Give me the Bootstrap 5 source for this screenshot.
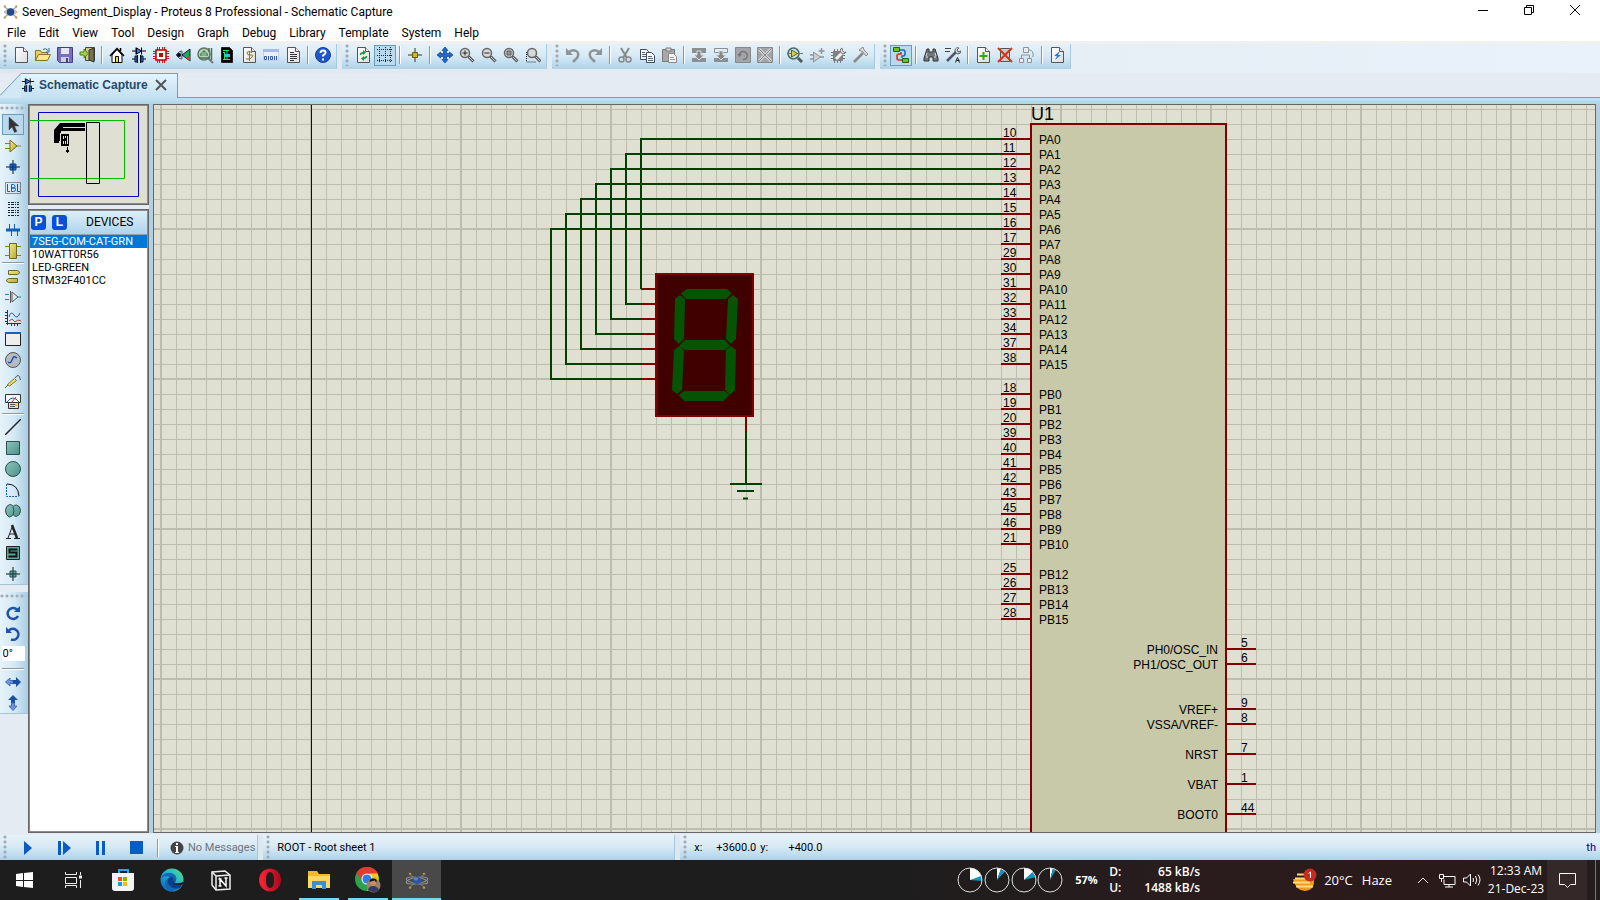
<!DOCTYPE html>
<html lang="en">
<head>
<meta charset="utf-8">
<meta name="viewport" content="width=device-width, initial-scale=1">
<title>Seven_Segment_Display - Proteus 8 Professional - Schematic Capture</title>
<link href="https://cdn.jsdelivr.net/npm/bootstrap@5.3.0/dist/css/bootstrap.min.css" rel="stylesheet">
<style>
:root{--bar:linear-gradient(#e6f1f9,#d9eaf5 45%,#bcdcef 80%,#b0d0e6);--ui:"Open Sans","Noto Sans",sans-serif;--small:Roboto,"Liberation Sans",sans-serif}
body{font:12px/16px var(--ui);color:#000;background:#e4ebf2;overflow:hidden}
svg{display:block;flex:none}
button{border:0;background:none;padding:0;color:inherit;font:inherit}
.titlebar{height:24px;padding:0 2px 0 3px;background:#fff}
.titlebar h1{font:12px/16px var(--small);margin:0 0 0 4px}
.winbtn{width:46px;height:20px;display:grid;place-items:center}
.menubar{height:17px;background:#fff;padding-left:7px;gap:13px;font-family:var(--small)}
.menubar a{color:#000;text-decoration:none}
.tools{height:32px;border-top:3px solid #f0f0f0;padding-bottom:4px;gap:5px;background:linear-gradient(90deg,#dfe6ee,#e9f2fa)}
.bar{background:var(--bar);padding-right:2px;border-right:1px solid #a5c9de}
.tools .bar{padding-bottom:3px}
.grip{width:10px;flex:none;background:radial-gradient(circle at 2px 2px,#9fa9b0 1px,#fff0 2px) 3px 0/4px 5px repeat-y}
.tb{width:22px;height:21px;display:grid;place-items:center;border:1px solid transparent;flex:none}
.tb.on{background:#b9d9ee;border-color:#6a9cba}
.sep{width:8px;flex:none;height:18px;background:linear-gradient(90deg,#8f979c 50%,#fff 50%) 3px 0/2px 100% no-repeat}
.tabs{height:25px}
.tabs svg.edge{width:21px;height:25px}
.tabface{height:25px;width:157px;padding-bottom:2px;background:linear-gradient(#e6f4fc,#c2e0f2);border-top:1px solid #6fa0bd;border-right:1px solid #6fa0bd;font:bold 12px/16px "Liberation Sans",sans-serif;color:#234a6c;gap:4px}
.fill{border-bottom:1px solid #6fa0bd}
.strip{height:6px;background:linear-gradient(#c2e2f4,#b2d3e6)}
.modes{gap:7px}
.vbar{background:linear-gradient(90deg,#e6f3fb,#d4e9f5 50%,#a9cee4);width:28px;padding-right:2px;border-bottom:1px solid #a5c4d6}
.hgrip{height:10px;width:100%;background:radial-gradient(circle at 2px 3px,#a3adb4 1px,#fff0 2px) 0 1px/5px 5px repeat-x}
.vb{width:22px;height:21px;display:grid;place-items:center;border:1px solid transparent}
.vb.on{background:#b9d9ee;border-color:#6a9cba}
.hsep{height:4px;width:22px;background:linear-gradient(#8f979c 50%,#fff 50%) 0 1px/100% 2px no-repeat}
.angle{width:23px;height:15px;margin:2px 0;border:0;padding:0 1px;font:11px/15px var(--small);color:#000}
.side{width:121px;gap:4px}
.frame{border:1px solid #666;outline:1px solid #8b8b8b;outline-offset:-2px}
.overview{height:101px;background:#dfe0d1}
.devhead{height:25px;background:linear-gradient(#dff0fa,#aed4ec);border-bottom:1px solid #8aa4b4;font:12px/16px var(--small);gap:6px;padding-left:2px}
.devhead span{margin-left:13px}
.pl{width:15px;height:15px;border-radius:3px;background:#0b4fd6;color:#fff;font:bold 12px/15px "Liberation Sans",sans-serif}
.devs li{font:11px/13px var(--small);padding-left:3px}
.devs li.sel{background:#0078d7;color:#fff}
.work{background:#b2d0e2;padding-left:4px;padding-right:4px}
.canvas{background:#dfe0d1;border:1px solid #666;min-width:0;min-height:0}
.canvas text{font:12px "Liberation Sans",Arial,sans-serif}
.status{height:27px;background:#dde7f0;border-top:2px solid #e4ebf2;font:11px/16px var(--small);gap:5px}
.sim{width:36px;height:25px;display:grid;place-items:center}
.sheet{width:412px}
.coord{width:20px;margin-left:4px}
.coords{padding-left:0}
.num{width:42px;text-align:right;white-space:nowrap}
.taskbar{height:40px;color:#fff;background:linear-gradient(90deg,#1d1d1d 55%,#2a1c1d 75%,#2b1a1a 90%,#251d1d);font:12px/16px var(--ui)}
.task{width:49px;height:40px;display:grid;place-items:center}
.task.run{background:linear-gradient(#76d7f3,#76d7f3) 50% 100%/40px 2px no-repeat}
.task.cur{background:linear-gradient(#76d7f3,#76d7f3) 50% 100%/100% 2px no-repeat #494949}
.net{width:91px}
.pct{width:34px;font-size:11px;margin-left:12px}
.weather{margin-left:92px}
.temp,.haze{font-size:13px}
.temp{margin-left:6px}
.haze{margin-left:9px}
.chev{margin-left:25px}
.moni{margin-left:10px}
.spk{margin-left:7px}
.clock{width:62px;line-height:18px;margin-left:4px}
.note{width:40px;height:40px;background:#342829;display:grid;place-items:center}
.desk{width:5px;height:40px;border-left:1px solid #777;margin-left:8px}
</style>
</head>
<body class="vh-100 d-flex flex-column">
<svg width="0" height="0" class="position-absolute" aria-hidden="true">
<defs>
<linearGradient id="pg" x2="1" y2="1"><stop stop-color="#fff"/><stop offset="1" stop-color="#dcdcdc"/></linearGradient>
<linearGradient id="gold" x2="1" y2="1"><stop stop-color="#f2ea90"/><stop offset="1" stop-color="#b5aa30"/></linearGradient>
<linearGradient id="teal" x2="1" y2="1"><stop stop-color="#8cc6bf"/><stop offset="1" stop-color="#4c8f88"/></linearGradient>
<linearGradient id="edgeg" x1="1" x2="0" y2="1"><stop stop-color="#5be06a"/><stop offset=".45" stop-color="#22b5d8"/><stop offset="1" stop-color="#0b5cb5"/></linearGradient>
<linearGradient id="opera" x2="1"><stop stop-color="#ff2436"/><stop offset="1" stop-color="#a80a1c"/></linearGradient>
<symbol id="page" viewBox="0 0 16 16"><path d="M2.500.5h8l4 4v11h-12z" fill="url(#pg)" stroke="#555"/><path d="M10.500.5v4h4" fill="#eee" stroke="#555"/></symbol>
<symbol id="mag" viewBox="0 0 16 16"><path d="M9.500 9.500l5 5" stroke="#555" stroke-width="3"/><path d="M10 10l4.500 4.500" stroke="#ccc"/><circle cx="6" cy="6" r="4.500" fill="#d5d9db" stroke="#666" stroke-width="1.500"/></symbol>
<symbol id="atom" viewBox="0 0 24 24"><g fill="none"><ellipse cx="12" cy="12" rx="11" ry="4" stroke="#999" transform="rotate(12 12 12)"/><ellipse cx="12" cy="12" rx="11" ry="4" stroke="#999" transform="rotate(-12 12 12)"/><path d="M5 4l4 6M19 4l-4 6M5 21l4-6M19 21l-4-6" stroke="#888"/></g><circle cx="12" cy="12" r="4.500" fill="#2e55a0"/><circle cx="11" cy="10" r="2" fill="#5f84c8"/><g fill="#c9953c"><circle cx="5" cy="3.500" r="1.300"/><circle cx="19" cy="3.500" r="1.300"/><circle cx="5" cy="21" r="1.300"/><circle cx="19" cy="21" r="1.300"/></g></symbol>
<symbol id="cap" viewBox="0 0 16 16"><path d="M1 4h14M5 .500v7M10.500.5v7M1 12h5M10 12h5M6.500 8v8M9.500 8v8" stroke="#000" fill="none"/><path d="M5.500 1v6l5-3z" fill="#2b8ad8" stroke="#002"/><path d="M4 9h2v6H4zM10 9h2v6h-2z" fill="#2b8ad8" stroke="#013"/></symbol>
</defs>
</svg>

<header>
<div class="titlebar d-flex align-items-center">
<svg width="15" height="16" viewBox="0 0 16 16"><path d="M1 2l4 3M15 2l-4 3M1 14l4-3M15 14l-4-3" stroke="#aaa" stroke-width="1.500"/><path d="M1 8q7-7 14 0q-7 7-14 0" fill="#cfd6df" stroke="#aaa"/><circle cx="8" cy="8" r="4" fill="#254a8c"/><g fill="#c99b4b"><circle cx="2" cy="2" r="1.200"/><circle cx="14" cy="2" r="1.200"/><circle cx="2" cy="14" r="1.200"/><circle cx="14" cy="14" r="1.200"/></g></svg>
<h1>Seven_Segment_Display - Proteus 8 Professional - Schematic Capture</h1>
<div class="ms-auto d-flex align-self-start">
<button class="winbtn" aria-label="Minimize"><svg width="10" height="10"><path d="M0 5.500h10" stroke="#000"/></svg></button>
<button class="winbtn" aria-label="Restore"><svg width="10" height="10" fill="none" stroke="#000"><path d="M.500 2.500h7v7h-7zM2.500 2.500v-2h7v7h-2"/></svg></button>
<button class="winbtn" aria-label="Close"><svg width="10" height="10"><path d="M0 0l10 10M10 0L0 10" stroke="#000"/></svg></button>
</div>
</div>
<nav class="menubar d-flex align-items-center" aria-label="Main menu"><a href="#">File</a><a href="#">Edit</a><a href="#">View</a><a href="#">Tool</a><a href="#">Design</a><a href="#">Graph</a><a href="#">Debug</a><a href="#">Library</a><a href="#">Template</a><a href="#">System</a><a href="#">Help</a></nav>
</header>

<div class="tools d-flex" role="toolbar" aria-label="Tools">
<div class="bar d-flex align-items-center"><span class="grip align-self-stretch"></span>
<button class="tb" aria-label="New"><svg width="16" height="16"><use href="#page"/></svg></button>
<button class="tb" aria-label="Open"><svg width="16" height="16"><path d="M.500 13.500v-10h5l1 2h6v3" fill="#e9cf62" stroke="#87712a"/><path d="M.500 13.500l3-6h12l-3 6z" fill="#ffe68a" stroke="#87712a"/><path d="M8 2.500q3-2 5 1M14 1v4h-3" fill="none" stroke="#2f5fa0"/></svg></button>
<button class="tb" aria-label="Save"><svg width="16" height="16"><path d="M.500.5h15v15h-13l-2-2z" fill="#7a6fbe" stroke="#453f80"/><path d="M4 1h8v6H4z" fill="#e6e6f2"/><path d="M4 10h8v5H4z" fill="#cfcfdf"/><path d="M9 11h2v4H9z" fill="#453f80"/></svg></button>
<button class="tb" aria-label="Exit"><svg width="16" height="16"><path d="M6.500.5h9v13h-9z" fill="#cdc98f" stroke="#444"/><path d="M10 3l5-2v14l-5-2z" fill="#777150" stroke="#333"/><path d="M1 5h4V2l4 4.500-4 4.500V8H1z" fill="#a9d648" stroke="#4b7d13"/></svg></button>
<span class="sep"></span>
<button class="tb" aria-label="Home"><svg width="16" height="16"><path d="M3 8v7.500h10V8L8 2.500z" fill="#fff" stroke="#000"/><path d="M1 9l7-7.500L15 9M11.500 1v3" fill="none" stroke="#000" stroke-width="1.500"/><path d="M6.500 9.500h3v6h-3z" fill="#f3dd38" stroke="#000"/></svg></button>
<button class="tb" aria-label="Schematic capture"><svg width="16" height="16"><use href="#cap"/></svg></button>
<button class="tb" aria-label="PCB layout"><svg width="16" height="16"><path d="M4.500 0v16M6.500 0v16M9.500 0v16M11.500 0v16M0 4.500h16M0 6.500h16M0 9.500h16M0 11.500h16" stroke="#d01818"/><path d="M3 3h10v10H3z" fill="#fff" stroke="#b00" stroke-width="1.500"/><path d="M6 6h4v4H6z" fill="#b01010"/></svg></button>
<button class="tb" aria-label="3D visualizer"><svg width="16" height="16"><path d="M1 8q4-5 6-4v8q-2 1-6-4z" fill="#a8cbe8" stroke="#557"/><circle cx="4" cy="8" r="2"/><path d="M15 2v12L7 8z" fill="#1fa860" stroke="#123"/><path d="M15 9v5l-4-3z" fill="#d33"/></svg></button>
<button class="tb" aria-label="Gerber viewer"><svg width="17" height="17"><path d="M11 11l5 5" stroke="#777" stroke-width="2"/><circle cx="7" cy="7" r="6" fill="#b8d2bd" stroke="#5b7562" stroke-width="1.500"/><path d="M4 9V7l3-3 3 3v2M2 11h11M14.500 1v12M12 1v4" stroke="#4a7055" fill="none" stroke-width="1.500"/><path d="M4.500 5h5v4h-5z" fill="#79b388"/></svg></button>
<button class="tb" aria-label="Design explorer"><svg width="16" height="16"><path d="M2.500.5h8l3 3v12h-11z" stroke="#222"/><path d="M4 3.500h6M4 5.500h2M4 12.500h7M5.500 5v8M8 4v3M8 10v3" stroke="#22e06a" fill="none"/><path d="M6 7h5v3H6z" fill="#12d2c8"/></svg></button>
<button class="tb" aria-label="Bill of materials"><svg width="16" height="16"><use href="#page"/><path d="M11 5.500q-5-2-5 .500t4 2-1 4H5M8.500 4v10" fill="none" stroke="#8a7a20"/></svg></button>
<button class="tb" aria-label="Source code"><svg width="16" height="16"><path d="M.500 2.500h15v11H.500z" fill="#e9eff8" stroke="#c3cde4"/><path d="M0 2h16v3H0z" fill="#a8bbe8"/><path d="M1.500 9.500h2v3h-2zM5.500 9v4M7.500 9.500h2v3h-2zM11.500 9v4M13.500 9v4" stroke="#3456b0" fill="none"/></svg></button>
<button class="tb" aria-label="Project notes"><svg width="16" height="16"><use href="#page"/><path d="M5 5.500h4M5 7.500h7M5 9.500h7M5 11.500h7M5 13.500h4" stroke="#333"/></svg></button>
<span class="sep"></span>
<button class="tb" aria-label="Help"><svg width="16" height="16"><circle cx="8" cy="8" r="7.500" fill="#2057c8" stroke="#183f90"/><path d="M5.500 6q0-2.500 2.500-2.500t2.500 2.300q0 1.200-2.500 2.700v1" fill="none" stroke="#fff" stroke-width="2"/><path d="M7 11.500h2v2H7z" fill="#fff"/></svg></button>
</div>
<div class="bar d-flex align-items-center"><span class="grip align-self-stretch"></span>
<button class="tb" aria-label="Redraw"><svg width="16" height="16"><use href="#page"/><path d="M5.500 8q0-2 3-2.500M11.500 9q0 2-3 2.500" fill="none" stroke="#159a35" stroke-width="1.500"/><path d="M8 3l3 2.500L8 8zM9 9v5l-3-2.500z" fill="#159a35"/></svg></button>
<button class="tb on" aria-label="Toggle grid"><svg width="16" height="16"><path d="M0 2.500h16M0 8.500h16M0 13.500h16" stroke="#222" stroke-dasharray="1 1"/><path d="M2.500 0v16M8.500 0v16M13.500 0v16" stroke="#222" stroke-dasharray="1 1"/></svg></button>
<span class="sep"></span>
<button class="tb" aria-label="Origin"><svg width="16" height="16"><path d="M8 1v14M1 8h14" stroke="#333"/><path d="M5.500 5.500h5v5h-5z" fill="#c9b62d" stroke="#6b5c00"/></svg></button>
<span class="sep"></span>
<button class="tb" aria-label="Pan"><svg width="16" height="16"><path d="M8 0l3 3.500H9.500v3h3V5L16 8l-3.500 3V9.500h-3v3H11L8 16l-3-3.500h1.500v-3h-3V11L0 8l3.500-3v1.500h3v-3H5z" fill="#1a6bd0" stroke="#123f86" stroke-width=".7"/></svg></button>
<button class="tb" aria-label="Zoom in"><svg width="16" height="16"><use href="#mag"/><path d="M3.500 6h5M6 3.500v5" stroke="#222"/></svg></button>
<button class="tb" aria-label="Zoom out"><svg width="16" height="16"><use href="#mag"/><path d="M3.500 6h5" stroke="#222"/></svg></button>
<button class="tb" aria-label="Zoom all"><svg width="16" height="16"><use href="#mag"/><path d="M4 4h4v4H4z" fill="#999" stroke="#555"/></svg></button>
<button class="tb" aria-label="Zoom area"><svg width="16" height="16"><path d="M1.500 5v10h9" fill="none" stroke="#222" stroke-dasharray="1 1"/><use href="#mag" x="1"/></svg></button>
</div>
<div class="bar d-flex align-items-center"><span class="grip align-self-stretch"></span>
<button class="tb" aria-label="Undo"><svg width="16" height="16"><path d="M3 6q4-4 8-2t1 7l-4 4" fill="none" stroke="#8d9498" stroke-width="2.500"/><path d="M1 1v7h7z" fill="#8d9498"/></svg></button>
<button class="tb" aria-label="Redo"><svg width="16" height="16"><path d="M13 6q-4-4-8-2t-1 7l4 4" fill="none" stroke="#8d9498" stroke-width="2.500"/><path d="M15 1v7H8z" fill="#8d9498"/></svg></button>
<span class="sep"></span>
<button class="tb" aria-label="Cut"><svg width="16" height="16"><path d="M4 1l6 10M12 1L6 11" stroke="#888" stroke-width="2"/><circle cx="4.500" cy="12.500" r="2.500" fill="none" stroke="#888" stroke-width="1.500"/><circle cx="11.500" cy="12.500" r="2.500" fill="none" stroke="#888" stroke-width="1.500"/></svg></button>
<button class="tb" aria-label="Copy"><svg width="16" height="16"><g fill="#fff" stroke="#3c4a66"><path d="M1.500 2.500h6l2 2v8h-8z"/><path d="M7.500 5.500h5l3 3v7h-8z"/></g><path d="M3 5.500h3M3 7.500h4M3 9.500h4M9 9.500h4M9 11.500h5M9 13.500h5" stroke="#567"/></svg></button>
<button class="tb" aria-label="Paste"><svg width="16" height="16"><path d="M1.500 2.500h12v12h-12z" fill="#a9a9a9" stroke="#777"/><path d="M5 1h5v3H5z" fill="#ddd" stroke="#777"/><path d="M7.500 6.500h5l3 3v6h-8z" fill="#f3f3f3" stroke="#888"/><path d="M9 10.500h4M9 12.500h5" stroke="#999"/></svg></button>
<span class="sep"></span>
<button class="tb" aria-label="Block copy"><svg width="16" height="16"><path d="M1 1h14v5H1zM1 11h14v4H1z" fill="#8c8f91"/><path d="M6 4h4v4h3l-5 5-5-5h3z" fill="#888" stroke="#d8dcde"/></svg></button>
<button class="tb" aria-label="Block move"><svg width="16" height="16"><path d="M1.500 1.500h13v4h-13z" fill="none" stroke="#8c8f91"/><path d="M1 11h14v4H1z" fill="#8c8f91"/><path d="M6 4h4v4h3l-5 5-5-5h3z" fill="#888" stroke="#d8dcde"/></svg></button>
<button class="tb" aria-label="Block rotate"><svg width="16" height="16"><path d="M.500.5h15v15H.500z" fill="#a3a6a8" stroke="#888"/><path d="M4.500 7a4 4 0 1 1 3.500 5.500" fill="none" stroke="#777" stroke-width="1.500"/><path d="M2 7h5l-2.500 3z" fill="#777"/></svg></button>
<button class="tb" aria-label="Block delete"><svg width="16" height="16"><path d="M.500.5h15v15H.500z" fill="#a3a6a8" stroke="#888"/><path d="M2 2l12 12M14 2L2 14" stroke="#d0d0d0" stroke-width="3"/><path d="M2 2l12 12M14 2L2 14" stroke="#888"/></svg></button>
<span class="sep"></span>
<button class="tb" aria-label="Pick parts"><svg width="16" height="16"><path d="M11 11l4 4" stroke="#555" stroke-width="3"/><circle cx="6.500" cy="6.500" r="5.500" fill="#bfe3df" stroke="#4b6a70" stroke-width="1.500"/><path d="M0 6.500h16" stroke="#776"/><path d="M4.500 3v7l6-3.500z" fill="#d6cf50" stroke="#666020"/></svg></button>
<button class="tb" aria-label="Make device"><svg width="16" height="16"><path d="M1 8h3M1 12h3M11 10h4M12.500 1v6M9.500 4h6" stroke="#8d9498" stroke-width="1.500"/><path d="M4.500 5v10l7-5z" fill="#ccc" stroke="#8d9498"/></svg></button>
<button class="tb" aria-label="Packaging tool"><svg width="16" height="16"><path d="M3.500 2v14M6.500 2v14M9.500 2v14M0 5.500h14M0 8.500h14M0 11.500h14" stroke="#777"/><path d="M2 4h10v10H2z" fill="#808385"/><path d="M5 12l7-7" stroke="#eee" stroke-width="3"/><path d="M11 1a3 3 0 1 0 4 4l-2 .5-1.500-2z" fill="#ddd" stroke="#777"/></svg></button>
<button class="tb" aria-label="Decompose"><svg width="16" height="16"><path d="M1 15l9-9" stroke="#888" stroke-width="2.500"/><path d="M6 3l4-3 1 3 4 4-2 2-3-4z" fill="#ddd" stroke="#888"/></svg></button>
</div>
<div class="bar d-flex align-items-center"><span class="grip align-self-stretch"></span>
<button class="tb on" aria-label="Wire autorouter"><svg width="16" height="16"><path d="M7 3h3q2 0 2 2v2q0 2-2 2H9v2" fill="none" stroke="#1467c8" stroke-width="1.500"/><path d="M8 5v2H6q-2 0-2 2v2q0 2 2 2h3" fill="none" stroke="#d52b16" stroke-width="1.500"/><path d="M.500.500h6v4h-6zM9.500 11.500h6v4h-6z" fill="#62c52a" stroke="#246010"/></svg></button>
<span class="sep"></span>
<button class="tb" aria-label="Search and tag"><svg width="16" height="16"><path d="M4 2h2v3h4V2h2l3 9v3h-5v-4H6v4H1v-3z" fill="#70787e" stroke="#333"/><path d="M3 10h2M11 10h2M4 6l-1 3M12 6l1 3" stroke="#ddd"/></svg></button>
<button class="tb" aria-label="Property assignment"><svg width="16" height="16"><path d="M0 1.500h6M0 4.500h5" stroke="#444"/><path d="M2 14l9-9" stroke="#556" stroke-width="2.500"/><path d="M14 1l-2 2 1 2 3-1a3 3 0 1 1-2-3" fill="none" stroke="#555"/><path d="M10.500 15.500l2-5 2 5M11.500 13.500h3" fill="none" stroke="#222"/></svg></button>
<span class="sep"></span>
<button class="tb" aria-label="New sheet"><svg width="16" height="16"><use href="#page"/><path d="M8.500 5v8M4.500 9h8" stroke="#3aa70e" stroke-width="2"/></svg></button>
<button class="tb" aria-label="Remove sheet"><svg width="16" height="16"><path d="M3.500 1.500h9v13h-9z" fill="#ccc" stroke="#555"/><path d="M1 1l14 14M15 1L1 15" stroke="#d6331c" stroke-width="2"/></svg></button>
<button class="tb" aria-label="Exit to parent"><svg width="16" height="16"><g fill="#eee" stroke="#8d9498"><path d="M4.500.5h5v5h-5zM.500 11.500h4v4h-4zM8.500 11.500h4v4h-4z"/><path d="M2.500 11V8h8v3M10 3q5 0 4 7" fill="none"/></g></svg></button>
<span class="sep"></span>
<button class="tb" aria-label="Electrical rules check"><svg width="16" height="16"><use href="#page"/><path d="M11 4L5 9h3l-2 4 6-5H9z" fill="#1b80dc"/></svg></button>
</div>
</div>

<div class="tabs d-flex">
<svg class="edge"><path d="M0 25V22L21 0V25z" fill="#d3e8f5"/><path d="M0 22.500L21 .5" stroke="#6fa0bd"/></svg>
<div class="tabface d-flex align-items-center"><svg width="14" height="16" viewBox="0 0 16 16"><use href="#cap"/></svg><span>Schematic Capture</span><button class="ms-auto me-2" aria-label="Close tab"><svg width="14" height="12"><path d="M1 1l10 10M11 1L1 11" stroke="#555" stroke-width="2"/></svg></button></div>
<div class="fill flex-grow-1"></div>
</div>
<div class="strip"></div>

<main class="d-flex flex-grow-1 overflow-hidden">
<div class="modes d-flex flex-column">
<div class="vbar d-flex flex-column align-items-center"><span class="hgrip"></span>
<button class="vb on" aria-label="Selection"><svg width="16" height="16"><path d="M4 0v13l3-3 2.500 5.500 2.500-1L9.500 9H14z" fill="#333" stroke="#555" stroke-width=".5"/></svg></button>
<button class="vb" aria-label="Component"><svg width="16" height="16"><path d="M0 5.500h5M0 10.500h5M11 8h5" stroke="#8a8020"/><path d="M5 2v12l7-6z" fill="url(#gold)" stroke="#6e6620"/></svg></button>
<button class="vb" aria-label="Junction"><svg width="16" height="16"><path d="M8 1v14M1 8h14" stroke="#111"/><path d="M5 5h6v6H5z" fill="#1d6fd0" stroke="#0d3f88"/><path d="M8 5v6M5 8h6" stroke="#083060"/></svg></button>
<button class="vb" aria-label="Wire label"><svg width="16" height="12"><path d="M.500.5h15v11H.500z" fill="none" stroke="#333" stroke-dasharray="1 1"/><path d="M2.500 2v7.500H5M6.500 2.500v7h2q2 0 2-2T9 6H7h2q1 0 1-1.500T8.500 2.500zM12.500 2v7.500H15" fill="none" stroke="#135bb5"/></svg></button>
<button class="vb" aria-label="Text script"><svg width="16" height="16"><path d="M3 1.500h11M3 3.500h11M3 6.500h11M3 9.500h11M3 11.500h11M3 14.500h11" stroke="#222" stroke-dasharray="2 1 3 1 1 1 2 1"/></svg></button>
<button class="vb" aria-label="Bus"><svg width="16" height="16"><path d="M1 8h14" stroke="#135fb8" stroke-width="3"/><path d="M4.500 2v5M9.500 2v5M6.500 9v5M12.500 9v5" stroke="#135fb8"/></svg></button>
<button class="vb" aria-label="Subcircuit"><svg width="16" height="16"><path d="M0 3.500h16M0 12.500h16" stroke="#8a8020"/><path d="M4.500.5h7v15h-7z" fill="url(#gold)" stroke="#6e6620"/></svg></button>
<span class="hsep"></span>
<button class="vb" aria-label="Terminals"><svg width="16" height="16"><path d="M3.500 2.500h9l2.500 2-2.500 2h-9zM12.500 10.500h-9l-2.500 2 2.500 2h9z" fill="url(#gold)" stroke="#6e6620"/></svg></button>
<button class="vb" aria-label="Device pins"><svg width="16" height="16"><path d="M0 5.500h4M0 10.500h4M13 8h3" stroke="#238a8a"/><path d="M5.500 2v12M7 3l6 5-6 5z" fill="#e4e8ea" stroke="#555"/></svg></button>
<button class="vb" aria-label="Graph"><svg width="16" height="16"><path d="M2.500 0v15M1 13.500h15M0 2.500h2M0 5.500h2M0 8.500h2M0 11.500h2M6.500 14v2M9.500 14v2M12.500 14v2" stroke="#333"/><path d="M4 7Q6 0 9 5t6-2" fill="none" stroke="#1460c0"/><path d="M4 11l3-2 3 3 3-2 3 1" fill="none" stroke="#d43a1c"/></svg></button>
<button class="vb" aria-label="Popup"><svg width="16" height="14"><path d="M.500.5h15v13H.500z" fill="#eee" stroke="#222"/><path d="M0 0h16v2H0z" fill="#1a5fc0"/></svg></button>
<button class="vb" aria-label="Generator"><svg width="16" height="16"><circle cx="8" cy="8" r="7.500" fill="#b6bbc0" stroke="#555"/><path d="M3 10q2 2 3.500-1t2-4 3.500 1" fill="none" stroke="#1556b8" stroke-width="1.500"/></svg></button>
<button class="vb" aria-label="Probe"><svg width="16" height="16"><path d="M0 15l3-3M10 5q4-6 5.500 2" stroke="#555" fill="none"/><path d="M2.500 11.500l7-6 2 2-7 5.500z" fill="#f0e56a" stroke="#777020"/></svg></button>
<button class="vb" aria-label="Instruments"><svg width="16" height="16"><path d="M.500.5h15v8H.500z" fill="#f6f6f6" stroke="#333"/><path d="M2 8q6-8 12 0" fill="none" stroke="#1460c0"/><path d="M7 8l4-5" stroke="#c23"/><path d="M3.500 8.500h10v6h-10z" fill="#ddd" stroke="#333"/><path d="M5 10.500h5M5 12.500h5" stroke="#555"/><path d="M10 10h2v2h-2z" fill="#eb0"/></svg></button>
<span class="hsep"></span>
<button class="vb" aria-label="2D line"><svg width="16" height="16"><path d="M0 16L16 0" stroke="#222" stroke-width="1.500"/></svg></button>
<button class="vb" aria-label="2D box"><svg width="16" height="16"><path d="M1.500 1.500h13v13h-13z" fill="url(#teal)" stroke="#2f4f4c"/></svg></button>
<button class="vb" aria-label="2D circle"><svg width="16" height="16"><circle cx="8" cy="8" r="7.500" fill="url(#teal)" stroke="#2f4f4c"/></svg></button>
<button class="vb" aria-label="2D arc"><svg width="16" height="16"><path d="M1.500 2v12.500h12" fill="none" stroke="#1460c0" stroke-dasharray="2 1"/><path d="M2 2q11 0 12 12" fill="none" stroke="#111"/></svg></button>
<button class="vb" aria-label="2D path"><svg width="16" height="16"><path d="M4.500 1.500q3 0 3.500 2 1-1.500 3.500-1.500 4 1 4 5.500t-4 6q-2 0-3.500-2-1 2.500-4 2.500-3.500-2-3.500-6.500t4-6z" fill="url(#teal)" stroke="#2f4f4c"/><path d="M8 4q2 4 0 8" fill="none" stroke="#2f4f4c"/></svg></button>
<button class="vb" aria-label="2D text"><svg width="16" height="16"><path d="M3 14L7.500 2M5 10h6M1 14.500h5M9 14.500h6" stroke="#222" fill="none"/><path d="M7 1l5 13" stroke="#222" stroke-width="2.500"/></svg></button>
<button class="vb" aria-label="2D symbol"><svg width="16" height="16"><path d="M1.500 1.500h13v13h-13z" fill="#5da49c" stroke="#222"/><path d="M12.500 4.500h-8v3h7v4h-8" fill="none" stroke="#111" stroke-width="2"/></svg></button>
<button class="vb" aria-label="2D marker"><svg width="16" height="16"><path d="M8 1v14M1 8h14" stroke="#111"/><path d="M5 5h6v6H5z" fill="#5da49c" stroke="#2f4f4c"/><path d="M8 5v6M5 8h6" stroke="#134"/></svg></button>
</div>
<div class="vbar d-flex flex-column align-items-center"><span class="hgrip"></span>
<button class="vb" aria-label="Rotate clockwise"><svg width="16" height="16"><path d="M12 4.500A5.500 5.500 0 1 0 13 11" fill="none" stroke="#1d52a8" stroke-width="2.500"/><path d="M15 1v6H9z" fill="#1d52a8"/></svg></button>
<button class="vb" aria-label="Rotate anticlockwise"><svg width="16" height="16"><path d="M4 4.500A5.500 5.500 0 1 1 6 13.500" fill="none" stroke="#1d52a8" stroke-width="2.500"/><path d="M1 1v6h6z" fill="#1d52a8"/></svg></button>
<input class="angle" value="0°" aria-label="Angle">
<span class="hsep mt-1"></span>
<button class="vb" aria-label="Mirror horizontally"><svg width="16" height="10"><path d="M.500 5l4.500-4v2.500h3v3H5V9z" fill="#6a93e0" stroke="#4a6cb8"/><path d="M16 5l-5-5v3H8v4h3v3z" fill="#174fa5"/></svg></button>
<button class="vb" aria-label="Mirror vertically"><svg width="10" height="16"><path d="M5 0l5 5H7v3H3V5H0z" fill="#174fa5"/><path d="M5 15.500L9 11H6.500V8h-3v3H1z" fill="#6a93e0" stroke="#4a6cb8"/></svg></button>
</div>
</div>

<aside class="side d-flex flex-column">
<div class="overview frame"><svg width="117" height="99"><g fill="none"><path d="M9.500 7.500h100v84h-100z" stroke="#00c"/><path d="M0 15.500h95.500v58H0" stroke="#0b0"/><path d="M57.500 17.500h13v61h-13z" stroke="#000"/></g><path d="M31 18h25v4H34v1h22v3H32v2h-1v8h-1v2h-5V25z"/><path d="M32 29h8v12h-8z"/><path d="M34 31h1v3h-1zM34 36h1v3h-1zM36 31h1v2h-1zM36 36h1v3h-1zM38 31h1v8h-1z" fill="#dfe0d1"/><path d="M38 42h1v3h1v2h-1v1h-1v-1h-1v-2h1z"/></svg></div>
<section class="frame bg-white flex-grow-1 d-flex flex-column">
<div class="devhead d-flex align-items-center"><button class="pl">P</button><button class="pl">L</button><span>DEVICES</span></div>
<ul class="devs list-unstyled m-0 px-0"><li class="sel">7SEG-COM-CAT-GRN</li><li>10WATT0R56</li><li>LED-GREEN</li><li>STM32F401CC</li></ul>
</section>
</aside>

<div class="work d-flex flex-grow-1">
<div class="canvas flex-grow-1 overflow-hidden">
<svg width="100%" height="100%" aria-label="Schematic sheet">
<defs>
<pattern id="minor" width="15" height="15" x="7" y="4" patternUnits="userSpaceOnUse"><path d="M0 .500h15M.500 0v15" stroke="#bcbdae"/></pattern>
<pattern id="major" width="150" height="150" x="6" y="123" patternUnits="userSpaceOnUse"><path d="M0 1h150M1 0v150" stroke="#bcbdae" stroke-width="2"/></pattern>
</defs>
<rect width="100%" height="100%" fill="url(#minor)"/><rect width="100%" height="100%" fill="url(#major)"/>
<path d="M157.500 0v2000" stroke="#00009a"/>
<g transform="translate(-154 -105)" fill="none" stroke-width="2">
<g stroke="#004000"><path d="M1001 139H641V289M1001 154H626V304H641M1001 169H611V319H641M1001 184H596V334H641M1001 199H581V349H641M1001 214H566V364H641M1001 229H551V379H641"/><path d="M746 432V484M730 484H762M737 491H754M743 498.500H748"/></g>
<path d="M641 289h15M641 304h15M641 319h15M641 334h15M641 349h15M641 364h15M641 379h15M746 416v16" stroke="#800000"/>
<rect x="656" y="274" width="97" height="142" fill="#400000" stroke="#800000"/>
<g fill="#045404"><path d="M681 293.500l6-4.500h40l5 4.500-6 5.500h-40z"/><path d="M679 346l6-6h40l5 6-5 4h-40z"/><path d="M678.500 395l6-4h40l5 4-6 6h-39z"/><path d="M675 299l5-4 5 4-1 40-5 5-5-5z"/><path d="M728 299l5-4 5 4-2 40-5 5-5-5z"/><path d="M674 350l5-4 5 4-2 40-5 4-5-4z"/><path d="M726 350l5-4 5 4-1 40-5 5-5-5z"/></g>
<rect x="1031" y="124" width="195" height="2000" fill="#c8c9a9" stroke="#800000"/>
<text x="1031" y="120" fill="#000" style="font-size:18px">U1</text>
<g id="pins"></g>
</g>
</svg>
</div>
</div>
</main>

<footer>
<div class="status d-flex align-items-stretch">
<div class="bar d-flex align-items-center"><span class="grip align-self-stretch"></span>
<button class="sim" aria-label="Play"><svg width="10" height="14"><path d="M1 0l8 7-8 7z" fill="#0a5cc4"/></svg></button>
<button class="sim" aria-label="Step"><svg width="13" height="14"><path d="M0 0h3v14H0zM5 0l8 7-8 7z" fill="#0a5cc4"/></svg></button>
<button class="sim" aria-label="Pause"><svg width="9" height="14"><path d="M0 0h3v14H0zM6 0h3v14H6z" fill="#0a5cc4"/></svg></button>
<button class="sim" aria-label="Stop"><svg width="13" height="13"><path d="M0 0h13v13H0z" fill="#0a5cc4"/></svg></button>
<span class="sep"></span>
<svg class="ms-2" width="14" height="14"><circle cx="7" cy="7" r="6.500" fill="#444"/><path d="M6 2h2v2H6zM5 5h3v6h1v1H5v-1h1V6H5z" fill="#fff"/></svg>
<span class="ms-1 text-secondary">No Messages</span></div>
<div class="bar sheet d-flex align-items-center"><span class="grip align-self-stretch"></span><span class="ps-1">ROOT - Root sheet 1</span></div>
<div class="bar d-flex align-items-center flex-grow-1 pe-0 border-0 overflow-hidden"><span class="grip align-self-stretch"></span><span class="coord">x:</span><span class="num">+3600.0</span><span class="coord">y:</span><span class="num">+400.0</span><span class="ms-auto text-nowrap pe-1" style="color:#00008b">th</span></div>
</div>
<div class="taskbar d-flex align-items-center">
<button class="task" aria-label="Start"><svg width="17" height="16"><path d="M0 2l7-1v7H0zM8 1l9-1v8H8zM0 9h7v6l-7-1zM8 9h9v7l-9-1z" fill="#fff"/></svg></button>
<button class="task" aria-label="Task view"><svg width="17" height="16" fill="none" stroke="#eee"><path d="M.500 0v2.500h11V0M.500 5.500h11v6H.500zM.500 16v-2.500h11V16M15.500 0v3M15.500 8v8"/><path d="M14 5h3" stroke-width="3"/></svg></button>
<button class="task" aria-label="Store"><svg width="24" height="24"><path d="M8 6V2h9v4" fill="none" stroke="#22a9e8" stroke-width="2"/><path d="M1 5h22v15q0 3-3 3H4q-3 0-3-3z" fill="#f4f4f4"/><path d="M7 9h4v4H7z" fill="#f25022"/><path d="M12 9h4v4h-4z" fill="#7fba00"/><path d="M7 14h4v4H7z" fill="#00a4ef"/><path d="M12 14h4v4h-4z" fill="#ffb900"/></svg></button>
<button class="task" aria-label="Edge"><svg width="24" height="24"><circle cx="12" cy="12" r="11.500" fill="url(#edgeg)"/><path d="M1 10q3-6 10-5 7 2 5 8l-1 2q3 2 7 0-3 8-11 8-6-1-6-7 0-5 5-7-6-2-9 1z" fill="#1267b8"/><path d="M10 9q-4 3-1 8 4 5 11 3l3-5q-4 2-8 1-3-2-2-4 1-4-3-3z" fill="#0a3f86"/><path d="M14 10q1 2 0 5 4 1 9-1l1 2-4 1q-5 0-7-2 1-2 1-5z" fill="#1d1d1d"/></svg></button>
<button class="task" aria-label="Notion"><svg width="20" height="21"><path d="M1 2l13-1 5 4v14l-14 1-4-5z" fill="#1d1d1d" stroke="#eee" stroke-width="1.500"/><path d="M1 2l4 4 14-1M5 6v14" fill="none" stroke="#eee" stroke-width="1.500"/><path d="M9 16V9l6 7V8M7.500 9h3M13.500 8h3M7.500 16h3" fill="none" stroke="#fff" stroke-width="1.500"/></svg></button>
<button class="task" aria-label="Opera"><svg width="24" height="24"><path d="M12 .500a11 11.500 0 1 0 .1 0zM12 4q4 0 4 8t-4 8-4-8 4-8z" fill="url(#opera)" fill-rule="evenodd"/></svg></button>
<button class="task run" aria-label="File Explorer"><svg width="22" height="20"><path d="M0 1h9l2 3h11v14H0z" fill="#f2b929"/><path d="M0 6h22v12H0z" fill="#ffd765"/><path d="M4 19v-8h14v8h-4v-4H8v4z" fill="#3a8fd6"/></svg></button>
<button class="task run" aria-label="Chrome"><svg width="26" height="26"><circle cx="12" cy="12" r="12" fill="#2ba24c"/><path d="M1.500 6A12 12 0 0 1 22.500 6L12 7l-4 8z" fill="#e33b2e"/><path d="M22.500 6.500Q26 14 20 21l-8 3 5-12-3-5.500z" fill="#fbc116"/><circle cx="12" cy="12" r="5.500" fill="#fff"/><circle cx="12" cy="12" r="4.500" fill="#2f7de8"/><circle cx="18.500" cy="18.500" r="7" fill="#9a8064"/><circle cx="18" cy="16" r="3" fill="#c68c68"/><path d="M14.500 15q0-4 4-3.500 4 0 3 4l-2-2z" fill="#191515"/><path d="M13 23q1-4 5-4t6 4q-5 4-11 0z" fill="#34386a"/></svg></button>
<button class="task cur" aria-label="Proteus"><svg width="24" height="19" viewBox="0 0 24 24" preserveAspectRatio="none"><use href="#atom"/></svg></button>
<div class="ms-auto d-flex align-items-center">
<svg width="106" height="26" fill="none" stroke="#ddd"><g stroke="none"><path d="M13 13V1A12 12 0 0 1 25 13z" fill="#fff"/><path d="M13 13L24 9Q26 11 25 14z" fill="#1296bd"/><path d="M40 13V1q4 0 4 1z" fill="#fff"/><path d="M40 13L44 1.500l4 3z" fill="#1296bd"/><path d="M67 13V1q7 0 9 4z" fill="#fff"/><path d="M67 13l9-8 3 5z" fill="#1296bd"/><path d="M93 13V1h3z" fill="#fff"/><path d="M93 13L96 1.500l3 1z" fill="#1296bd"/></g><circle cx="13" cy="13" r="12"/><circle cx="40" cy="13" r="12"/><circle cx="67" cy="13" r="12"/><circle cx="93" cy="13" r="12"/></svg>
<strong class="pct">57%</strong>
<div class="net fw-semibold"><div class="d-flex justify-content-between"><span>D:</span><span>65 kB/s</span></div><div class="d-flex justify-content-between"><span>U:</span><span>1488 kB/s</span></div></div>
<svg class="weather" width="26" height="24"><path d="M1 11h21q1 11-9 12Q4 23 1 11z" fill="#f09a1c"/><path d="M5 6.500h12M3 10.500h16M1 14.500h17M4 18.500h17" stroke="#ffd981" stroke-width="2"/><circle cx="18" cy="7" r="6.500" fill="#c92a20"/><path d="M16.500 5.500l2-1.500v6" fill="none" stroke="#fff"/></svg>
<span class="temp">20°C</span><span class="haze">Haze</span>
<svg class="chev" width="12" height="8"><path d="M1 7l5-5 5 5" fill="none" stroke="#fff"/></svg>
<svg class="moni" width="17" height="15" fill="none" stroke="#fff"><path d="M4 3.500h12v8H5v-5M10 11v3M6 14h8M.500 1.500h4v4h-4zM2.500 5v4"/></svg>
<svg class="spk" width="18" height="14" fill="none" stroke="#fff"><path d="M.500 5h3l4-4v12l-4-4h-3zM10 5q1 2 0 4M12.500 3q2.500 4 0 8M15 1.500q4 5 0 11"/></svg>
<div class="clock text-center"><div>12:33 AM</div><div>21-Dec-23</div></div>
<button class="note" aria-label="Notifications"><svg width="17" height="17"><path d="M.500 1.500h16v11h-5l-3 3-3-3h-5z" fill="none" stroke="#fff"/></svg></button>
<span class="desk"></span>
</div>
</div>
</footer>
<script>
// Pin tables: [pin number, name, y of the pin line]
const left = [];
const pa = [10,11,12,13,14,15,16,17,29,30,31,32,33,34,37,38];
pa.forEach((n, i) => left.push([n, 'PA' + i, 139 + 15 * i]));
[18,19,20,39,40,41,42,43,45,46,21].forEach((n, i) => left.push([n, 'PB' + i, 394 + 15 * i]));
[25,26,27,28].forEach((n, i) => left.push([n, 'PB' + (12 + i), 574 + 15 * i]));
const right = [[5,'PH0/OSC_IN',649],[6,'PH1/OSC_OUT',664],[9,'VREF+',709],[8,'VSSA/VREF-',724],[7,'NRST',754],[1,'VBAT',784],[44,'BOOT0',814]];
const txt = (x, y, s, a) => `<text x="${x}" y="${y}" fill="#000" text-anchor="${a || 'start'}">${s}</text>`;
document.getElementById('pins').innerHTML =
  left.map(([n, s, y]) => `<path d="M1001 ${y}h29" stroke="#800000"/>` + txt(1003, y - 2, n) + txt(1039, y + 5, s)).join('') +
  right.map(([n, s, y]) => `<path d="M1227 ${y}h29" stroke="#800000"/>` + txt(1241, y - 2, n) + txt(1218, y + 5, s, 'end')).join('');
</script>
<script src="https://cdn.jsdelivr.net/npm/bootstrap@5.3.0/dist/js/bootstrap.bundle.min.js"></script>
</body>
</html>
